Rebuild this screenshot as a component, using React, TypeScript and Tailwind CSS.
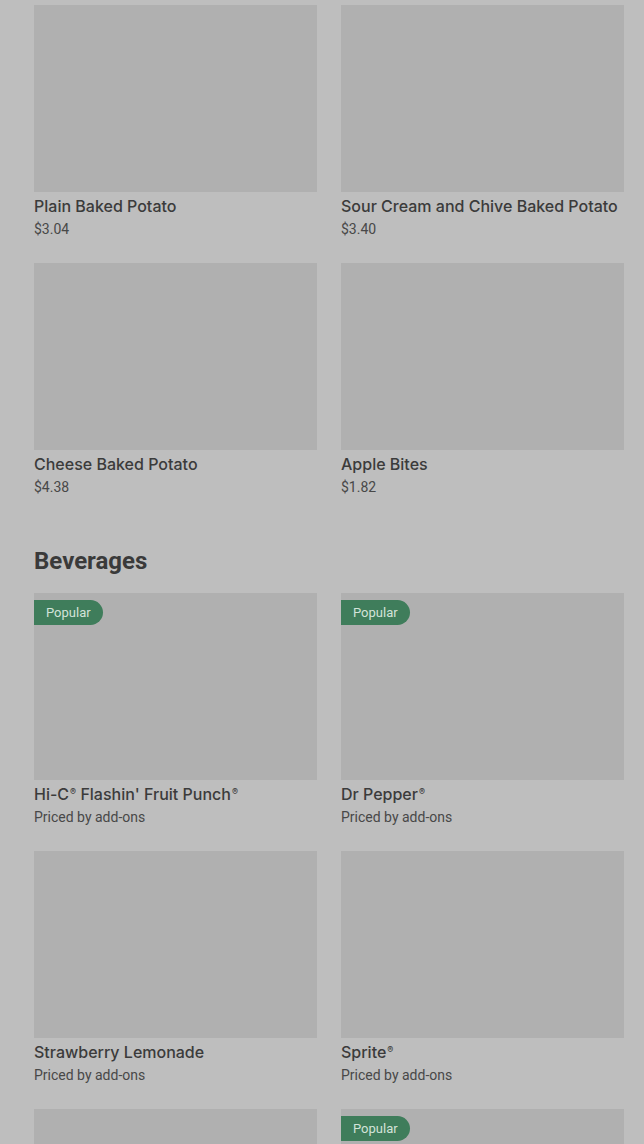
import React from 'react';

type Item = { name: string; price: string; popular?: boolean };

const SIDES: Item[] = [
  { name: 'Plain Baked Potato', price: '$3.04' },
  { name: 'Sour Cream and Chive Baked Potato', price: '$3.40' },
  { name: 'Cheese Baked Potato', price: '$4.38' },
  { name: 'Apple Bites', price: '$1.82' },
];

const BEVERAGES: Item[] = [
  { name: 'Hi-C® Flashin\' Fruit Punch®', price: 'Priced by add-ons', popular: true },
  { name: 'Dr Pepper®', price: 'Priced by add-ons', popular: true },
  { name: 'Strawberry Lemonade', price: 'Priced by add-ons' },
  { name: 'Sprite®', price: 'Priced by add-ons' },
  { name: 'Lemonade', price: 'Priced by add-ons' },
  { name: 'Coca-Cola®', price: 'Priced by add-ons', popular: true },
];

// render ® as a small raised mark, like the menu does
const renderName = (name: string) =>
  name.split('®').map((part, i, arr) => (
    <React.Fragment key={i}>
      {part}
      {i < arr.length - 1 && (
        <span className="relative -top-[5px] ml-px text-[9px] leading-none">®</span>
      )}
    </React.Fragment>
  ));

const MenuCard: React.FC<{ item: Item }> = ({ item }) => (
  <div className="flex flex-col">
    <div className="relative h-[187px] bg-[#b0b0b0]">
      {item.popular && (
        <span className="absolute left-0 top-[7px] h-[25px] flex items-center px-3 rounded-r-full bg-[#3f7d5b] text-[13px] text-[#d3e3d9]">
          Popular
        </span>
      )}
    </div>
    <div
      className="mt-[2px] h-6 text-[16px] leading-6 font-medium text-[#3b3b3b] truncate"
      style={{ fontFamily: 'Inter, "Liberation Sans", sans-serif' }}
    >
      {renderName(item.name)}
    </div>
    <div className="mt-px text-[14px] leading-5 text-[#484848]">{item.price}</div>
  </div>
);

export default function App() {
  return (
    <div
      className="bg-[#bebebe] pl-[34px] pr-[20px] pt-[5px] overflow-hidden h-[1144px]"
      style={{ fontFamily: 'Roboto, "Liberation Sans", sans-serif' }}
    >
      <div className="grid grid-cols-2 gap-x-6 gap-y-6">
        {SIDES.map((item) => (
          <MenuCard key={item.name} item={item} />
        ))}
      </div>

      <h2 className="mt-12 mb-4 text-[24px] leading-8 font-bold text-[#3a3a3a]">Beverages</h2>

      <div className="grid grid-cols-2 gap-x-6 gap-y-6">
        {BEVERAGES.map((item) => (
          <MenuCard key={item.name} item={item} />
        ))}
      </div>
    </div>
  );
}
